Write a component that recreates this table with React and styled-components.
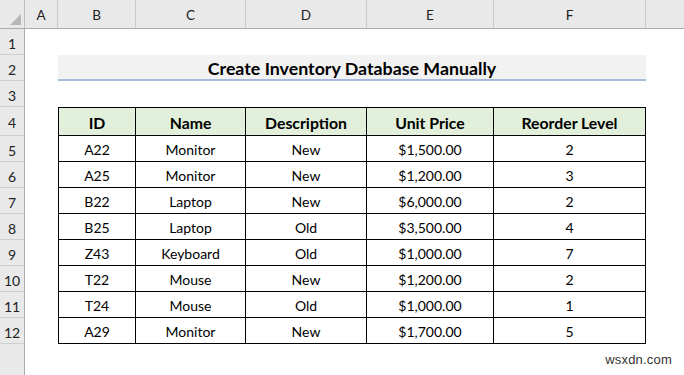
import React from "react";
import styled, { createGlobalStyle } from "styled-components";

const Global = createGlobalStyle`
  html, body { margin: 0; padding: 0; background: #fff; }
  body { font-family: Lato, "Open Sans", sans-serif; }
`;

const COLS = "25px 33px 78px 110px 121px 127px 152px 1fr";

const Sheet = styled.div`
  position: relative;
  width: 684px;
  height: 375px;
  overflow: hidden;
  background: #fff;
  display: flex;
  flex-direction: column;
`;

const Row = styled.div`
  display: grid;
  grid-template-columns: ${COLS};
  height: ${(p) => p.$h}px;
  flex: none;
`;

const ColHeaderRow = styled(Row)`
  background: #e9e9e9;
  border-bottom: 1px solid #ababab;
  box-sizing: border-box;
`;

const Corner = styled.div`
  position: relative;
  border-right: 1px solid #bdbdbd;
  &::after {
    content: "";
    position: absolute;
    right: 3px;
    bottom: 3px;
    width: 0;
    height: 0;
    border-style: solid;
    border-width: 0 0 11px 11px;
    border-color: transparent transparent #b7b7b7 transparent;
  }
`;

const ColLabel = styled.div`
  display: flex;
  align-items: center;
  justify-content: center;
  font-size: 13.5px;
  color: #222;
  border-right: 1px solid #c9c9c9;
  padding-top: 2px;
  box-sizing: border-box;
`;

const RowLabel = styled.div`
  background: #e9e9e9;
  border-right: 1px solid #ababab;
  border-bottom: 1px solid #d0d0d0;
  box-sizing: border-box;
  display: flex;
  align-items: center;
  justify-content: center;
  font-size: 14px;
  color: #222;
  padding-top: 3px;
`;

const Blank = styled.div``;

const Title = styled.div`
  grid-column: 3 / 8;
  background: #f2f2f2;
  border-bottom: 2px solid #a8b9df;
  box-sizing: border-box;
  display: flex;
  align-items: center;
  justify-content: center;
  font-weight: 700;
  font-size: 17.8px;
  color: #000;
  padding-top: 2px;
`;

const Cell = styled.div`
  box-sizing: border-box;
  display: flex;
  align-items: center;
  justify-content: center;
  border-right: 1px solid #000;
  border-bottom: 1px solid #000;
  border-left: ${(p) => (p.$first ? "1px solid #000" : "none")};
  border-top: ${(p) => (p.$top ? "1px solid #000" : "none")};
  background: ${(p) => (p.$head ? "#e2efda" : "#fff")};
  font-weight: ${(p) => (p.$head ? 700 : 400)};
  font-size: ${(p) => (p.$head ? "15.8px" : "14px")};
  color: #000;
  padding-top: 2px;
`;

const Watermark = styled.div`
  position: absolute;
  right: 12px;
  bottom: 8px;
  font-family: "Liberation Sans", Arial, sans-serif;
  font-size: 13px;
  color: #333;
  letter-spacing: 0.2px;
`;

const headers = ["ID", "Name", "Description", "Unit Price", "Reorder Level"];
const data = [
  ["A22", "Monitor", "New", "$1,500.00", "2"],
  ["A25", "Monitor", "New", "$1,200.00", "3"],
  ["B22", "Laptop", "New", "$6,000.00", "2"],
  ["B25", "Laptop", "Old", "$3,500.00", "4"],
  ["Z43", "Keyboard", "Old", "$1,000.00", "7"],
  ["T22", "Mouse", "New", "$1,200.00", "2"],
  ["T24", "Mouse", "Old", "$1,000.00", "1"],
  ["A29", "Monitor", "New", "$1,700.00", "5"],
];

export default function App() {
  return (
    <>
      <Global />
      <Sheet>
        <ColHeaderRow $h={29}>
          <Corner />
          {["A", "B", "C", "D", "E", "F"].map((c) => (
            <ColLabel key={c}>{c}</ColLabel>
          ))}
          <Blank />
        </ColHeaderRow>
        <Row $h={26}>
          <RowLabel>1</RowLabel>
        </Row>
        <Row $h={26}>
          <RowLabel>2</RowLabel>
          <Blank />
          <Title>Create Inventory Database Manually</Title>
        </Row>
        <Row $h={26}>
          <RowLabel>3</RowLabel>
        </Row>
        <Row $h={29}>
          <RowLabel>4</RowLabel>
          <Blank />
          {headers.map((h, i) => (
            <Cell key={h} $head $top $first={i === 0}>
              {h}
            </Cell>
          ))}
        </Row>
        {data.map((r, ri) => (
          <Row $h={26} key={ri}>
            <RowLabel>{ri + 5}</RowLabel>
            <Blank />
            {r.map((v, i) => (
              <Cell key={i} $first={i === 0}>
                {v}
              </Cell>
            ))}
          </Row>
        ))}
        <Row $h={40}>
          <RowLabel />
        </Row>
        <Watermark>wsxdn.com</Watermark>
      </Sheet>
    </>
  );
}
